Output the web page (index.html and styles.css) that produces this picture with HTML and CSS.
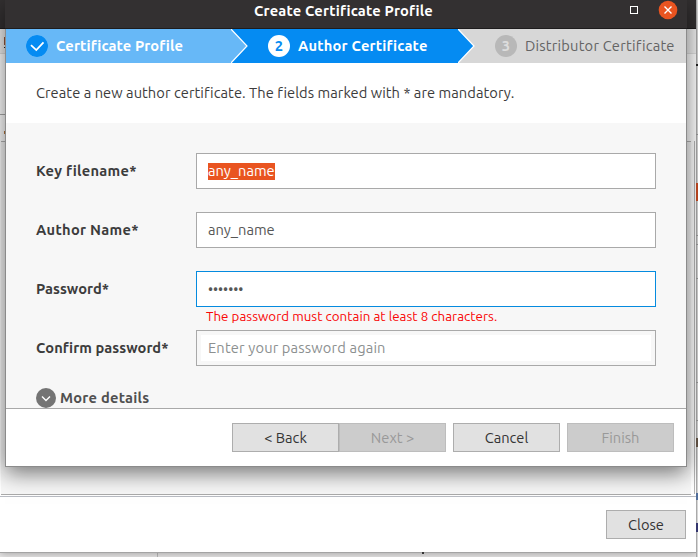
FILE: index.html
```html
<!DOCTYPE html>
<html lang="en">
<head>
<meta charset="utf-8">
<title>Create Certificate Profile</title>
<link rel="stylesheet" href="styles.css">
</head>
<body>
<div class="desktop">
  <div class="edge">
    <i class="mark m1"></i><i class="mark m2"></i><i class="mark m3"></i><i class="mark m4"></i><i class="mark m5"></i><i class="mark m6"></i><i class="mark m7"></i><i class="mark m8"></i><i class="mark m9"></i><i class="mark m10"></i><i class="mark m11"></i>
  </div>
  <i class="mark divider"></i><i class="mark speck"></i>
  <section class="parent">
    <div class="parent-title"></div>
    <div class="parent-tools"></div>
    <div class="parent-head"></div>
    <div class="parent-list"></div>
    <div class="parent-footer"><button class="btn close-btn">Close</button></div>
    <i class="mark l1"></i><i class="mark l2"></i><i class="mark l3"></i><i class="mark l4"></i>
  </section>
  <section class="dialog">
    <header class="titlebar">
      <h1 class="title"><span class="t-title">Create Certificate Profile</span></h1>
      <svg class="controls" width="56" height="28" viewBox="0 0 56 28">
        <rect x="0.5" y="6.5" width="7" height="7" fill="none" stroke="#fff"/>
        <circle cx="38" cy="10" r="9.3" fill="#e95420"/>
        <path d="M34.5 6.5l7 7M41.5 6.5l-7 7" stroke="#fff" stroke-width="1.4"/>
      </svg>
    </header>
    <nav class="steps">
      <div class="step done">
        <svg class="badge" width="22" height="22" viewBox="0 0 22 22"><circle cx="11" cy="11" r="11" fill="#058bf2"/><path d="M5 10.2l5.3 4.9 7.2-7.7" fill="none" stroke="#fff" stroke-width="1.8"/></svg>
        <span class="t-s1">Certificate Profile</span>
      </div>
      <div class="step current">
        <svg class="arrow" width="17" height="34" viewBox="0 0 17 34"><path d="M0 0L16 17 0 34z" fill="#67b8f7"/><path d="M0 0L16 17 0 34" fill="none" stroke="#fff" stroke-width="1.2"/></svg>
        <span class="badge num">2</span><span class="t-s2">Author Certificate</span>
      </div>
      <div class="step next">
        <svg class="arrow" width="17" height="34" viewBox="0 0 17 34"><path d="M0 0L16 17 0 34z" fill="#058bf2"/><path d="M0 0L16 17 0 34" fill="none" stroke="#fff" stroke-width="1.2"/></svg>
        <span class="badge num">3</span><span class="t-s3">Distributor Certificate</span>
      </div>
    </nav>
    <p class="intro"><span class="t-intro">Create a new author certificate. The fields marked with * are mandatory.</span></p>
    <main class="form">
      <div class="row"><label class="t-l1">Key filename*</label><div class="field"><span class="selected t-any">any_name</span></div></div>
      <div class="row"><label class="t-l2">Author Name*</label><div class="field"><span class="t-any">any_name</span></div></div>
      <div class="row"><label class="t-l3">Password*</label><div class="field focus"><span class="dots">•••••••</span></div></div>
      <p class="error"><span class="t-err">The password must contain at least 8 characters.</span></p>
      <div class="row"><label class="t-l4">Confirm password*</label><div class="field inset"><span class="t-ph">Enter your password again</span></div></div>
      <div class="more">
        <svg width="20" height="20" viewBox="0 0 20 20"><circle cx="10" cy="10" r="10" fill="#747474"/><path d="M6 8.5l4 4 4-4" fill="none" stroke="#fff" stroke-width="1.4"/></svg>
        <span class="t-more">More details</span>
      </div>
    </main>
    <footer class="actions">
      <div class="pair"><button class="btn">&lt; Back</button><button class="btn off" disabled>Next &gt;</button></div>
      <button class="btn">Cancel</button>
      <button class="btn off" disabled>Finish</button>
    </footer>
  </section>
</div>
</body>
</html>
```
FILE: styles.css
```css
* { box-sizing: border-box; }
body { margin: 0; font: 14.667px/20px Ubuntu, "Noto Sans", sans-serif; color: #3c3c3c; }
span, label { white-space: nowrap; }
.desktop { position: relative; width: 698px; height: 557px; overflow: hidden; background: #e9e8e8; }

.parent { position: absolute; left: 0; top: 0; width: 697px; height: 553px; display: flex; flex-direction: column; background: #fff; border-right: 1px solid #aaa; border-bottom: 1px solid #a4a4a4; box-shadow: 0 1px 8px rgba(0,0,0,.3); }
.parent-title { height: 29px; background: #333031; border-bottom: 1px solid #1e1c1d; }
.parent-tools { height: 25px; background: #f0f0f0; border-bottom: 1px solid #e0e0e0; }
.parent-head { height: 87px; background: #fff; }
.parent-list { height: 354px; margin: 0 5px 0 1px; background: #f7f7f7; border-top: 1px solid #b5b5b5; border-bottom: 1px solid #aaa; }
.parent-footer { flex: 1; margin-top: 1px; border-top: 1px solid #b9bcc3; display: flex; justify-content: flex-end; align-items: flex-start; padding: 13px 10px 0 0; }

.dialog { position: absolute; z-index: 3; left: 5px; top: 0; width: 682px; height: 467px; display: flex; flex-direction: column; background: #fff; border: solid #8b8b8b; border-width: 0 1px 1px; box-shadow: 0 6px 21px 0 rgba(0,0,0,.54); }
.titlebar { height: 29px; margin: 0 -1px; flex: none; display: flex; background: #333031; border-bottom: 1px solid #1e1c1d; color: #fff; }
.title { margin: 1px 0 0 249px; width: 376px; font-size: 14.667px; line-height: 20px; font-weight: 700; letter-spacing: .18px; }
.controls { flex: none; }
.steps { display: flex; height: 34px; flex: none; }
.step { display: flex; align-items: center; gap: 8px; color: #fff; font-weight: 700; letter-spacing: .2px; }
.t-s1 { letter-spacing: .13px; }
.badge { flex: none; width: 22px; height: 22px; border-radius: 50%; }
.num { background: #fff; color: #058bf2; text-align: center; line-height: 22px; }
.done { width: 225px; padding-left: 20px; background: #67b8f7; }
.current { width: 227px; background: #058bf2; }
.next { width: 228px; background: #d7d7d7; color: #646464; font-weight: 400; }
.next .num { background: #b8b8b8; color: #ddd; font-weight: 700; }
.arrow { flex: none; margin-right: 12px; }
.intro { margin: 0; height: 60px; flex: none; padding: 20px 0 0 30px; letter-spacing: .05px; }
.form { height: 285px; flex: none; padding: 30px 0 0 30px; background: #f7f7f7; }
.row { display: flex; align-items: center; height: 36px; margin-bottom: 23px; }
.row label { width: 160px; font-weight: 700; }
.t-l1, .t-l2 { letter-spacing: .28px; }
.t-l4 { letter-spacing: .04px; }
.t-ph { letter-spacing: .15px; }
.field { width: 460px; height: 36px; border: 1px solid #a9a9a9; background: #fff; padding: 0 11px; display: flex; align-items: center; color: #565656; }
.selected { background: #e95420; color: #fff; line-height: 16px; height: 17px; margin-top: -2px; position: relative; top: 1px; }
.focus { border-color: #058bdf; }
.inset { box-shadow: inset 0 0 0 4px #f7f7f7; color: #8c9090; }
.dots { font-size: 14px; letter-spacing: 0; }
.error { margin: -23px 0 0; padding: 0 0 0 170px; height: 23px; font-size: 13.333px; line-height: 19px; letter-spacing: .04px; color: #f90505; }
.more { display: flex; align-items: center; gap: 4px; margin-top: -1px; font-weight: 700; letter-spacing: .25px; color: #505050; }
.actions { flex: 1; border-top: 1px solid #a9a9a9; display: flex; justify-content: flex-end; gap: 7px; padding: 14px 12px 0 0; }
.pair { display: flex; }
.btn { width: 107px; height: 29px; padding: 0; border: 1px solid #adadad; background: #e1e1e1; color: #343434; font: inherit; line-height: 27px; }
.off { background: #ccc; border-color: #bdbdbd; color: #999; }
.close-btn { width: 80px; }

.selected { margin-top: 0; position: static; }

.mark { position: absolute; display: block; }
.edge { position: absolute; z-index: 2; left: 696px; top: 0; width: 2px; height: 557px; background: #d5d5d5; border-left: 1px solid #aaa; }
.edge .mark { left: -1px; width: 2px; height: 1px; background: #999; }
.edge .m1 { top: 64px; height: 2px; background: #222; }
.edge .m2 { top: 134px; }
.edge .m3 { top: 183px; height: 18px; background: #c64a22; }
.edge .m4 { top: 235px; }
.edge .m5 { top: 244px; }
.edge .m6 { top: 278px; }
.edge .m7 { top: 382px; }
.edge .m8 { top: 420px; }
.edge .m9 { top: 438px; height: 9px; background: #665648; }
.edge .m10 { top: 493px; height: 7px; background: #526f9c; }
.edge .m11 { top: 523px; height: 9px; background: #34366e; }
.divider { left: 157px; top: 553px; width: 1px; height: 4px; background: #bbb; }
.speck { z-index: 2; left: 422px; top: 552px; width: 2px; height: 2px; background: #333; }
.l1 { left: 4px; top: 37px; width: 2px; height: 12px; background: linear-gradient(#95583f 8px, #eee 8px, #eee 10px, #222 10px, #222 11px, transparent 11px); }
.l2 { left: 0; top: 114px; width: 6px; height: 1px; background: #aaa; }
.l3 { left: 694px; top: 141px; width: 1px; height: 353px; background: #b5b5b5; }
.l4 { left: 4px; top: 131px; width: 1px; height: 3px; background: #b8793c; }
```
